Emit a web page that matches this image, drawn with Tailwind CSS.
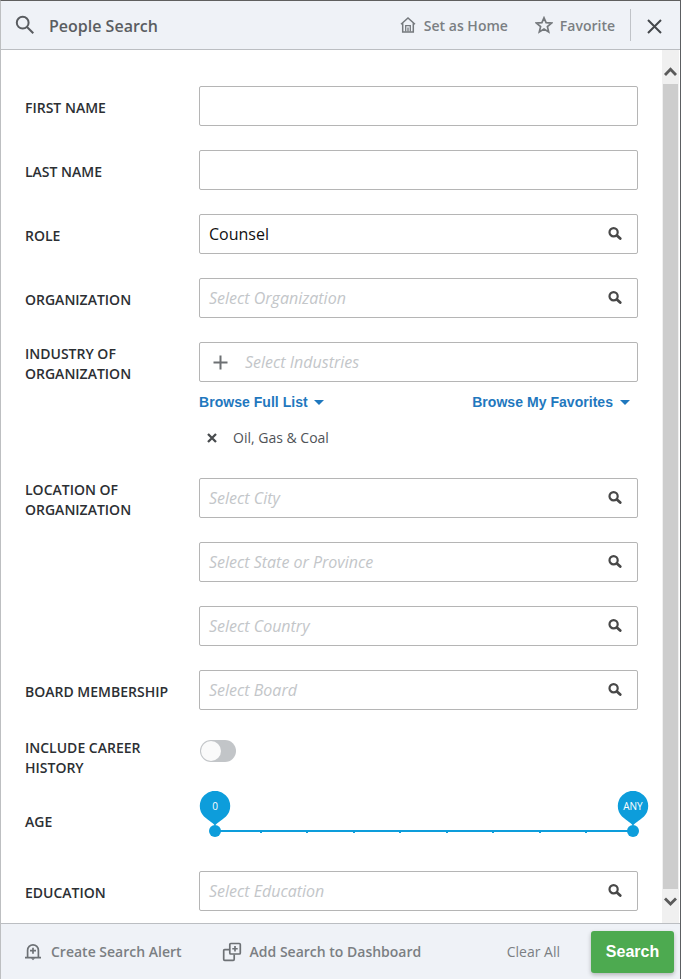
<!DOCTYPE html>
<html lang="en">
<head>
<meta charset="utf-8">
<title>People Search</title>
<script src="https://cdn.jsdelivr.net/npm/@tailwindcss/browser@4"></script>
</head>
<body class="bg-white">
<svg class="hidden">
  <symbol id="mag" viewBox="0 0 14 14"><circle cx="5.6" cy="5.2" r="4.1" fill="none" stroke="#484848" stroke-width="2.2"/><path d="M8.900 8.500L12.200 11.600" stroke="#484848" stroke-width="2.800" stroke-linecap="round"/></symbol>
  <symbol id="caret" viewBox="0 0 10 5"><path d="M0 0H10L5 5Z" fill="#1f78be"/></symbol>
  <symbol id="pin" viewBox="0 0 32 47"><path d="M16 35C15 32.5 10 30 5 25.500A15.200 15.200 0 1 1 27 25.500C22 30 17 32.500 16 35Z" fill="#0d9ddb"/><circle cx="16" cy="40" r="6" fill="#0d9ddb"/></symbol>
</svg>
<div class="flex h-[979px] w-[681px] flex-col border-t border-r border-l border-t-[#5f5f5f] border-r-[#5c5f62] border-l-[#bdbfc1] bg-white font-['Open_Sans','Noto_Sans',sans-serif] text-[14px] leading-5 whitespace-nowrap text-[#2c2f33]">
  <header class="flex h-[49px] shrink-0 items-center border-b border-[#bbbec2] bg-[#eff2f7] font-semibold text-[#7b7f83]">
    <svg class="ml-[14px] size-5 shrink-0" viewBox="0 0 20 20" fill="none" stroke="#595c60" stroke-width="2"><circle cx="7.700" cy="7.700" r="5.900"/><path d="M12 12L18.300 18.300"/></svg>
    <h1 class="mt-0.5 ml-[14px] text-[16px] text-[#5a5d61]">People Search</h1>
    <div class="ml-auto flex items-center">
      <svg class="mr-2 h-[18px] w-4" viewBox="0 0 16 18" fill="none" stroke="#75797d" stroke-width="1.500"><path d="M1 8.200L8 2L15 8.200M2.700 7V15.900H13.300V7"/><path d="M5.700 15.500V9.700H10.300V15.500M8 11.500V15.500" stroke-width="1.300"/></svg>
      <span class="mt-0.5">Set as Home</span>
    </div>
    <div class="ml-[27px] flex items-center">
      <svg class="mr-[7px] size-[18px]" viewBox="0 0 18 18" fill="none" stroke="#75797d" stroke-width="1.700"><path d="M9 1.800L11.100 6.700L16.500 7.100L12.400 10.600L13.700 16L9 13.100L4.300 16L5.600 10.600L1.500 7.100L6.900 6.700Z"/></svg>
      <span class="mt-0.5">Favorite</span>
    </div>
    <div class="ml-[15px] h-8 w-px bg-[#c0c3c8]"></div>
    <svg class="mt-0.5 mr-[18px] ml-4 size-[15px] shrink-0" viewBox="0 0 15 15" stroke="#44474b" stroke-width="2"><path d="M1 1L14 14M14 1L1 14"/></svg>
  </header>

  <div class="flex h-[873px] shrink-0">
    <main class="flex w-[661px] flex-col pt-9 pl-6 font-semibold">
      <div class="flex h-16"><div class="w-[174px] pt-3">FIRST NAME</div><div class="h-10 w-[439px] rounded-[2px] border border-[#b5b5b5]"></div></div>
      <div class="flex h-16"><div class="w-[174px] pt-3">LAST NAME</div><div class="h-10 w-[439px] rounded-[2px] border border-[#b5b5b5]"></div></div>
      <div class="flex h-16"><div class="w-[174px] pt-3">ROLE</div><div class="flex h-10 w-[439px] items-center justify-between rounded-[2px] border border-[#b5b5b5] pr-[15px] pl-[9px] text-[16px] font-normal text-[#111]"><span>Counsel</span><svg class="size-[14px]"><use href="#mag"/></svg></div></div>
      <div class="flex h-16"><div class="w-[174px] pt-3">ORGANIZATION</div><div class="flex h-10 w-[439px] items-center justify-between rounded-[2px] border border-[#b5b5b5] pr-[15px] pl-[9px] text-[16px] font-normal text-[#c3c6c9] italic"><span>Select Organization</span><svg class="size-[14px]"><use href="#mag"/></svg></div></div>
      <div class="flex h-[136px]">
        <div class="w-[174px] pt-[2px]">INDUSTRY OF<br>ORGANIZATION</div>
        <div class="w-[439px]">
          <div class="flex h-10 items-center rounded-[2px] border border-[#b5b5b5] pl-[13px] text-[16px] font-normal text-[#c3c6c9] italic"><svg class="mr-[17px] size-[15px]" viewBox="0 0 15 15" stroke="#6d7073" stroke-width="2"><path d="M7.500 .5V14.500M.5 7.500H14.500"/></svg><span>Select Industries</span></div>
          <div class="mt-[10px] flex items-center justify-between pr-2 font-['Liberation_Sans',Arial,sans-serif] font-bold text-[#1f78be]">
            <div class="flex items-center gap-[6px]"><span class="tracking-[0.04px]">Browse Full List</span><svg class="h-[5px] w-[10px]"><use href="#caret"/></svg></div>
            <div class="flex items-center gap-[7px]"><span class="tracking-[0.04px]">Browse My Favorites</span><svg class="h-[5px] w-[10px]"><use href="#caret"/></svg></div>
          </div>
          <div class="mt-4 flex items-center pl-2 font-normal text-[#505357]"><svg class="mr-4 size-[10px]" viewBox="0 0 10 10" stroke="#484b4e" stroke-width="2.300"><path d="M1 1L9 9M9 1L1 9"/></svg><span>Oil, Gas &amp; Coal</span></div>
        </div>
      </div>
      <div class="flex h-48">
        <div class="w-[174px] pt-[2px]">LOCATION OF<br>ORGANIZATION</div>
        <div class="flex w-[439px] flex-col gap-6 text-[16px] font-normal text-[#c3c6c9] italic">
          <div class="flex h-10 items-center justify-between rounded-[2px] border border-[#b5b5b5] pr-[15px] pl-[9px]"><span>Select City</span><svg class="size-[14px]"><use href="#mag"/></svg></div>
          <div class="flex h-10 items-center justify-between rounded-[2px] border border-[#b5b5b5] pr-[15px] pl-[9px]"><span>Select State or Province</span><svg class="size-[14px]"><use href="#mag"/></svg></div>
          <div class="flex h-10 items-center justify-between rounded-[2px] border border-[#b5b5b5] pr-[15px] pl-[9px]"><span>Select Country</span><svg class="size-[14px]"><use href="#mag"/></svg></div>
        </div>
      </div>
      <div class="flex h-[68px]"><div class="w-[174px] pt-3">BOARD MEMBERSHIP</div><div class="flex h-10 w-[439px] items-center justify-between rounded-[2px] border border-[#b5b5b5] pr-[15px] pl-[9px] text-[16px] font-normal text-[#c3c6c9] italic"><span>Select Board</span><svg class="size-[14px]"><use href="#mag"/></svg></div></div>
      <div class="flex h-[53px]"><div class="w-[174px]">INCLUDE CAREER<br>HISTORY</div><div class="mt-[2px] ml-px flex h-[22px] w-9 rounded-full bg-[#c2c5c8] p-px"><div class="size-5 rounded-full bg-[#fafafa]"></div></div></div>
      <div class="flex h-[80px]">
        <div class="w-[174px] pt-[21px]">AGE</div>
        <div class="relative h-[47px] w-[450px]">
          <svg class="block h-[47px] w-[450px]" viewBox="0 0 450 47"><path d="M16 40H434" stroke="#0d9ddb" stroke-width="2"/><path d="M61 41.500h2M107 41.500h2M154 41.500h2M200 41.500h2M247 41.500h2M293 41.500h2M340 41.500h2M386 41.500h2" stroke="#0d9ddb"/><use href="#pin" x="0" y="0" width="32" height="47"/><use href="#pin" x="418" y="0" width="32" height="47"/></svg>
          <div class="absolute top-[9px] left-0 w-8 text-center text-[10px] leading-3 font-normal text-white">0</div>
          <div class="absolute top-[9px] left-[418px] w-8 text-center text-[10px] leading-3 font-normal text-white">ANY</div>
        </div>
      </div>
      <div class="flex"><div class="w-[174px] pt-3">EDUCATION</div><div class="flex h-10 w-[439px] items-center justify-between rounded-[2px] border border-[#b5b5b5] pr-[15px] pl-[9px] text-[16px] font-normal text-[#c3c6c9] italic"><span>Select Education</span><svg class="size-[14px]"><use href="#mag"/></svg></div></div>
    </main>
    <div class="flex w-[17px] flex-col items-center bg-[#f0f0f0]">
      <svg class="h-[34px] w-[17px]" viewBox="0 0 17 34" fill="none" stroke="#5b5b5b" stroke-width="2.800"><path d="M3 25L8.500 19.300L14 25"/></svg>
      <div class="h-[805px] w-[15px] bg-[#cdcdcd]"></div>
      <svg class="h-[34px] w-[17px]" viewBox="0 0 17 34" fill="none" stroke="#5b5b5b" stroke-width="2.800"><path d="M3 9.500L8.500 15L14 9.500"/></svg>
    </div>
  </div>

  <footer class="flex h-[56px] shrink-0 items-center border-t border-[#bbbec2] bg-[#eff2f7] font-semibold text-[#7b7f83]">
    <svg class="ml-6 h-[18px] w-4 shrink-0" viewBox="0 0 16 18" fill="none" stroke="#6d7175" stroke-width="1.700"><path d="M0 14.600H16M2.600 14.500V7.200A5.400 5.400 0 0 1 13.400 7.200V14.500M8 4.700V10.700M5 7.700H11"/><path d="M6 15.300H10L8 17.300Z" fill="#6d7175" stroke="none"/></svg>
    <span class="ml-[10px]">Create Search Alert</span>
    <svg class="ml-10 size-5 shrink-0" viewBox="0 0 20 20" fill="none" stroke="#6d7175" stroke-width="1.700"><rect x="7.800" y="1.500" width="10.500" height="10.500" rx="1"/><path d="M7.500 7.700H2.700Q1.700 7.700 1.700 8.700V17.300Q1.700 18.300 2.700 18.300H11.200Q12.200 18.300 12.200 17.300V12.500M13 4V9.500M10.300 6.750H15.700"/></svg>
    <span class="ml-2">Add Search to Dashboard</span>
    <span class="ml-auto font-normal">Clear All</span>
    <button class="mr-[6px] ml-[31px] h-[42px] w-[83px] shrink-0 rounded-[3px] bg-[#4daa50] font-['Liberation_Sans',Arial,sans-serif] text-[16px] font-bold text-white shadow-[0_2px_4px_#00000040]">Search</button>
  </footer>
</div>
</body>
</html>
